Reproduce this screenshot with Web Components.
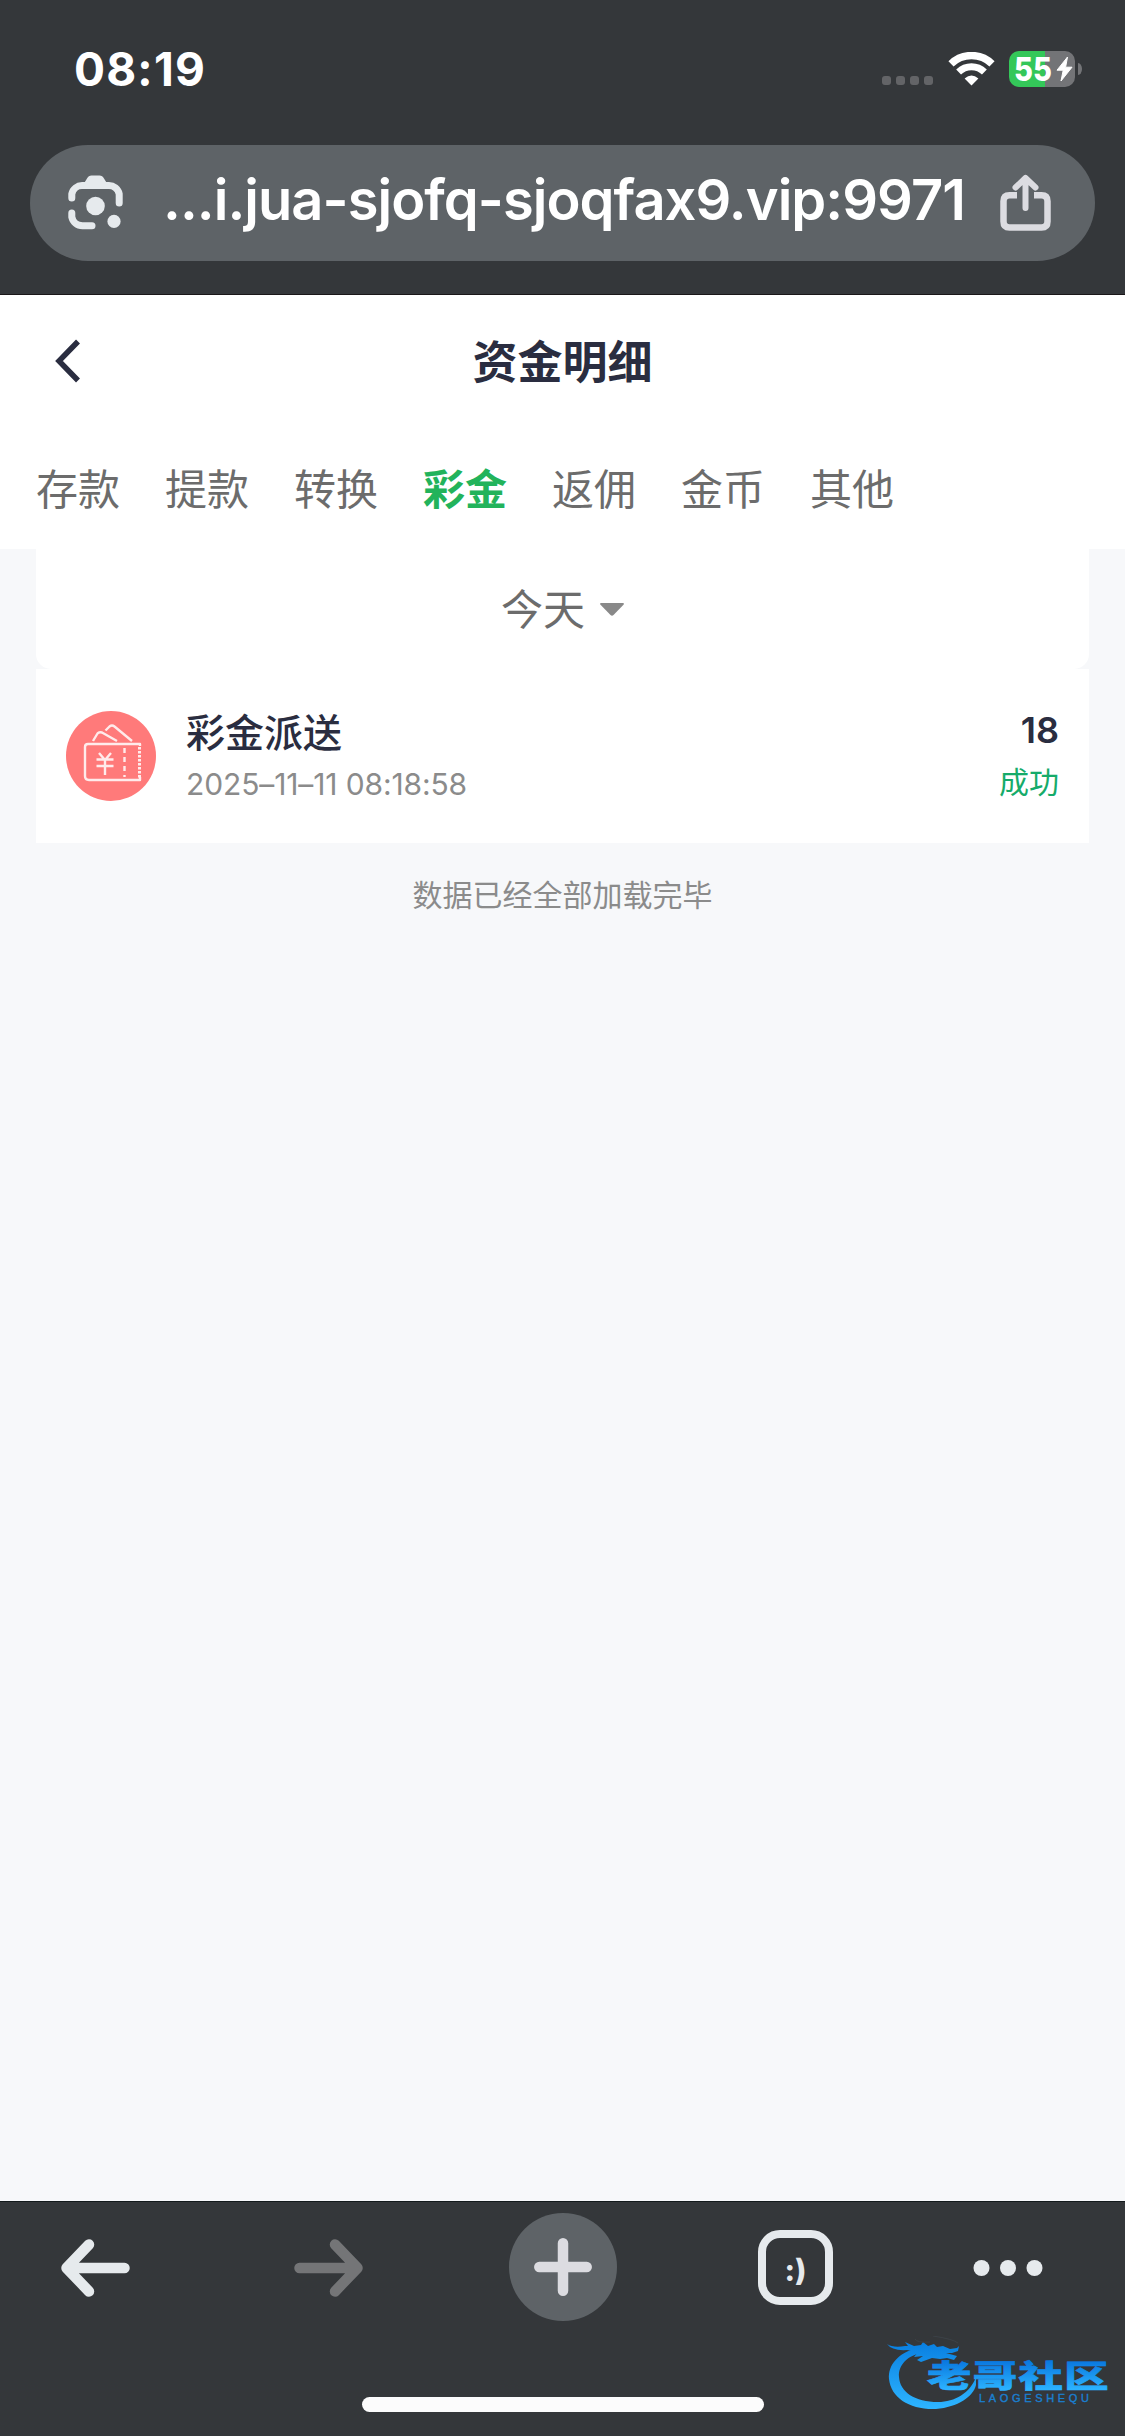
<!DOCTYPE html>
<html lang="zh-CN">
<head>
<meta charset="utf-8">
<title>资金明细</title>
<style>
  body {
    margin: 0;
    width: 1125px;
    height: 2436px;
    overflow: hidden;
    background: #f7f8fa;
    font-family: Inter, "Noto Sans CJK SC", sans-serif;
  }
</style>
</head>
<body>
<phone-screen>
  <status-bar slot="top" time="08:19" battery="55"></status-bar>
  <url-bar slot="top">...i.jua-sjofq-sjoqfax9.vip:9971</url-bar>
  <page-header>资金明细</page-header>
  <tab-list>
    <tab-item>存款</tab-item>
    <tab-item>提款</tab-item>
    <tab-item>转换</tab-item>
    <tab-item active>彩金</tab-item>
    <tab-item>返佣</tab-item>
    <tab-item>金币</tab-item>
    <tab-item>其他</tab-item>
  </tab-list>
  <date-filter>今天</date-filter>
  <record-item amount="18" status="成功">
    彩金派送
    <span slot="time">2025–11–11 08:18:58</span>
  </record-item>
  <list-end>数据已经全部加载完毕</list-end>
  <browser-toolbar slot="bottom"></browser-toolbar>
  <site-watermark slot="bottom"></site-watermark>
</phone-screen>

<script>
class PhoneScreen extends HTMLElement {
  constructor() {
    super();
    this.attachShadow({ mode: "open" });
    this.shadowRoot.innerHTML = `
      <style>
        :host {
          display: flex;
          flex-direction: column;
          position: relative;
          width: 1125px;
          height: 2436px;
          overflow: hidden;
        }
        header {
          height: 294px;
          background: #34373a;
          border-bottom: 1px solid #1a1719;
        }
        main { flex: 1; }
      </style>
      <header><slot name="top"></slot></header>
      <main><slot></slot></main>
      <slot name="bottom"></slot>
    `;
  }
}

class StatusBar extends HTMLElement {
  constructor() {
    super();
    this.attachShadow({ mode: "open" });
  }

  connectedCallback() {
    this.shadowRoot.innerHTML = `
      <style>
        :host {
          display: flex;
          align-items: center;
          justify-content: space-between;
          box-sizing: border-box;
          height: 138px;
          padding: 0 43px 0 74px;
          color: #fff;
        }
        .time {
          font-size: 46px;
          font-weight: 750;
          line-height: 60px;
          letter-spacing: 1.2px;
        }
        .right { display: flex; align-items: center; }
        .dots { display: flex; gap: 5px; margin: 23px 15px 0 0; }
        .dots i {
          width: 9px;
          height: 9px;
          border-radius: 3px;
          background: #636467;
        }
        .wifi { margin-right: 14px; }
        .battery {
          display: flex;
          align-items: center;
          justify-content: space-between;
          box-sizing: border-box;
          width: 66px;
          height: 36px;
          padding: 0 2px 0 5px;
          border-radius: 10px;
          background: linear-gradient(90deg, #34c759 36px, #737477 36px);
          font-size: 33px;
          font-weight: 800;
          line-height: 36px;
        }
        .battery span {
          width: 40px;
          transform: scaleX(0.88);
          transform-origin: left;
        }
        .tip {
          width: 4px;
          height: 12px;
          margin-left: 3px;
          border-radius: 0 4px 4px 0 / 0 6px 6px 0;
          background: #737477;
        }
        svg { display: block; flex: none; }
      </style>
      <div class="time">${this.getAttribute("time")}</div>
      <div class="right">
        <div class="dots"><i></i><i></i><i></i><i></i></div>
        <svg class="wifi" width="47" height="34" viewBox="0 0 47 34" fill="none" stroke="#fff">
          <path d="M3 11.8A29.5 29.5 0 0 1 44 11.8" stroke-width="7.4"/>
          <path d="M10.6 20A18.6 18.6 0 0 1 36.4 20" stroke-width="7"/>
          <path d="M23.5 33.6L16.6 26.6Q23.5 20.2 30.4 26.6Z" fill="#fff" stroke="none"/>
        </svg>
        <div class="battery">
          <span>${this.getAttribute("battery")}</span>
          <svg width="17" height="26" viewBox="0 0 17 26">
            <path d="M11.5 1L1 14.2h6.2L5 25 16 11.2H9.6z" fill="#fff" stroke="#fff" stroke-linejoin="round"/>
          </svg>
        </div>
        <div class="tip"></div>
      </div>
    `;
  }
}

class UrlBar extends HTMLElement {
  constructor() {
    super();
    this.attachShadow({ mode: "open" });
    this.shadowRoot.innerHTML = `
      <style>
        :host {
          display: flex;
          align-items: center;
          box-sizing: border-box;
          height: 116px;
          margin: 7px 30px 0;
          padding: 0 43px 0 37px;
          border-radius: 58px;
          background: #5e6367;
        }
        .url {
          flex: 1;
          padding-left: 38px;
          font-size: 56px;
          font-weight: 600;
          line-height: 68px;
          letter-spacing: -0.95px;
          margin-top: -6px;
          white-space: nowrap;
          color: #fff;
        }
        svg { display: block; flex: none; }
      </style>
      <svg width="58" height="58" viewBox="0 0 58 58" fill="none" stroke="#e6eaed" stroke-width="7" stroke-linecap="round">
        <path d="M4.8 24V20A10.5 10.5 0 0 1 15.3 11.6H41.5A10.5 10.5 0 0 1 52.2 20V29"/>
        <path d="M4.8 39V43A11 11 0 0 0 15.5 51.8H25"/>
        <path d="M16 11L20 4.5Q21.5 1.5 24.5 1.5H32.5Q35.5 1.5 37 4.5L41 11Z" fill="#e6eaed" stroke="none"/>
        <circle cx="28.5" cy="32" r="9.3" fill="#e6eaed" stroke="none"/>
        <circle cx="47" cy="47.4" r="6.6" fill="#e6eaed" stroke="none"/>
      </svg>
      <div class="url"><slot></slot></div>
      <svg width="53" height="58" viewBox="0 0 53 58" fill="none" stroke="#dcdce1" stroke-width="6.5" stroke-linecap="round" stroke-linejoin="round">
        <path d="M18 21.3H10.5Q4.5 21.3 4.5 27.3V47.5Q4.5 53.5 10.5 53.5H42.5Q48.5 53.5 48.5 47.5V27.3Q48.5 21.3 42.5 21.3H35" stroke-linecap="butt"/>
        <path d="M26.5 34V5M16.5 13.5L26.5 4L36.5 13.5" stroke-width="6"/>
      </svg>
    `;
  }
}

class PageHeader extends HTMLElement {
  constructor() {
    super();
    this.attachShadow({ mode: "open" });
    this.shadowRoot.innerHTML = `
      <style>
        :host {
          display: grid;
          grid-template-columns: 150px 1fr 150px;
          align-items: center;
          height: 132px;
          background: #fff;
          color: #2a2d40;
        }
        h1 {
          margin: 0;
          padding-top: 3px;
          text-align: center;
          font-size: 45px;
          font-weight: 700;
          line-height: 60px;
        }
        svg { display: block; margin-left: 54px; }
      </style>
      <svg width="28" height="44" viewBox="0 0 28 44" fill="none" stroke="#2a2d40" stroke-width="5.5">
        <path d="M24 2.5L5 22L24 41.5"/>
      </svg>
      <h1><slot></slot></h1>
    `;
  }
}

class TabList extends HTMLElement {
  constructor() {
    super();
    this.attachShadow({ mode: "open" });
    this.shadowRoot.innerHTML = `
      <style>
        :host {
          display: flex;
          align-items: center;
          gap: 45px;
          box-sizing: border-box;
          height: 122px;
          padding: 4px 0 0 36px;
          background: #fff;
        }
      </style>
      <slot></slot>
    `;
  }
}

class TabItem extends HTMLElement {
  constructor() {
    super();
    this.attachShadow({ mode: "open" });
    this.shadowRoot.innerHTML = `
      <style>
        :host {
          display: block;
          font-size: 42px;
          line-height: 60px;
          color: #6c6c6c;
        }
        :host([active]) {
          font-weight: 700;
          color: #22b35b;
        }
      </style>
      <slot></slot>
    `;
  }
}

class DateFilter extends HTMLElement {
  constructor() {
    super();
    this.attachShadow({ mode: "open" });
    this.shadowRoot.innerHTML = `
      <style>
        :host {
          display: flex;
          align-items: center;
          justify-content: center;
          gap: 15px;
          height: 120px;
          margin: 0 36px;
          border-radius: 0 0 15px 15px;
          background: #fff;
          font-size: 42px;
          line-height: 60px;
          color: #6c6c6c;
        }
        span { padding-top: 1px; }
        svg { display: block; }
      </style>
      <span><slot></slot></span>
      <svg width="24" height="13" viewBox="0 0 24 13">
        <path d="M1 0H23Q24.5 .5 23.5 1.7L13.5 12Q12 13.5 10.5 12L.5 1.7Q-.5 .5 1 0Z" fill="#898989"/>
      </svg>
    `;
  }
}

class RecordItem extends HTMLElement {
  constructor() {
    super();
    this.attachShadow({ mode: "open" });
  }

  connectedCallback() {
    this.shadowRoot.innerHTML = `
      <style>
        :host {
          display: flex;
          align-items: center;
          gap: 30px;
          height: 174px;
          margin: 0 36px;
          padding: 0 30px;
          background: #fff;
          color: #2a2d40;
        }
        svg { display: block; flex: none; }
        .info { flex: 1; padding-top: 4px; }
        .name {
          font-size: 39px;
          font-weight: 500;
          line-height: 52px;
        }
        .time {
          font-size: 30px;
          line-height: 50px;
          letter-spacing: -0.12px;
          color: #8b8b8b;
        }
        .result { padding-top: 4px; text-align: right; }
        .amount {
          font-size: 36px;
          font-weight: 600;
          line-height: 49px;
        }
        .status {
          font-size: 30px;
          line-height: 55px;
          color: #15ab6a;
        }
      </style>
      <svg width="90" height="90" viewBox="0 0 90 90" fill="none" stroke="#fff" stroke-width="2.4" stroke-linejoin="round">
        <circle cx="45" cy="45" r="45" fill="#ff7a7a" stroke="none"/>
        <g opacity="0.85">
          <path d="M74 35V33H22Q19 33 19 36V65Q19 69 23 69H74V66"/>
          <path d="M73.5 36V67" stroke-width="3" stroke-dasharray="2.5 1.5"/>
          <path d="M58.5 37V66" stroke-dasharray="5 4"/>
          <path d="M27 30L31.5 22.5Q33 20.5 36 21.5L51 30M39.5 19.5L43.5 15.5Q46 13.5 48.5 15.5L66 30"/>
          <path d="M33 42L39 49L45 42M39 49V64M30.5 48.5H47.5M30.5 55H47.5"/>
        </g>
      </svg>
      <div class="info">
        <div class="name"><slot></slot></div>
        <div class="time"><slot name="time"></slot></div>
      </div>
      <div class="result">
        <div class="amount">${this.getAttribute("amount")}</div>
        <div class="status">${this.getAttribute("status")}</div>
      </div>
    `;
  }
}

class ListEnd extends HTMLElement {
  constructor() {
    super();
    this.attachShadow({ mode: "open" });
    this.shadowRoot.innerHTML = `
      <style>
        :host {
          display: block;
          text-align: center;
          font-size: 30px;
          line-height: 105px;
          color: #8b8b8b;
        }
      </style>
      <slot></slot>
    `;
  }
}

class BrowserToolbar extends HTMLElement {
  constructor() {
    super();
    this.attachShadow({ mode: "open" });
    this.shadowRoot.innerHTML = `
      <style>
        :host {
          display: flex;
          flex-direction: column;
          justify-content: space-between;
          align-items: center;
          box-sizing: border-box;
          height: 235px;
          padding: 11px 0 24px;
          border-top: 1px solid #141a1c;
          background: #34373a;
        }
        nav {
          display: grid;
          grid-template-columns: 232px 217px 249px 215px 1fr;
          align-items: center;
          box-sizing: border-box;
          width: 100%;
          height: 108px;
          padding-left: 60px;
        }
        svg { display: block; }
        .plus {
          display: grid;
          place-items: center;
          width: 108px;
          height: 108px;
          border-radius: 50%;
          background: #5e6367;
        }
        .tabs {
          display: grid;
          place-items: center;
          box-sizing: border-box;
          width: 75px;
          height: 75px;
          border: 8px solid #e6eaed;
          border-radius: 22px;
          color: #e6eaed;
          font-size: 30px;
          font-weight: 800;
          line-height: 34px;
        }
        .tabs span { padding-top: 5px; }
        .home {
          width: 402px;
          height: 15px;
          border-radius: 8px;
          background: #fcfcfc;
        }
      </style>
      <nav>
        <svg width="72" height="60" viewBox="0 0 72 60" fill="none" stroke="#e6eaed" stroke-width="10.5" stroke-linecap="round" stroke-linejoin="round">
          <path d="M64.5 31H7M29 7.5L6.5 31L29 54.5"/>
        </svg>
        <svg width="72" height="60" viewBox="0 0 72 60" fill="none" stroke="#747577" stroke-width="10.5" stroke-linecap="round" stroke-linejoin="round">
          <path d="M7.5 31H65M43 7.5L65.5 31L43 54.5"/>
        </svg>
        <div class="plus">
          <svg width="58" height="58" viewBox="0 0 58 58" fill="none" stroke="#dcdce1" stroke-width="10.5" stroke-linecap="round">
            <path d="M29 5.3V52.7M5.3 29H52.7"/>
          </svg>
        </div>
        <div class="tabs"><span>:)</span></div>
        <svg width="70" height="18" viewBox="0 0 70 18" fill="#e6eaed">
          <circle cx="8.5" cy="10" r="8"/>
          <circle cx="35" cy="10" r="8"/>
          <circle cx="61.5" cy="10" r="8"/>
        </svg>
      </nav>
      <div class="home"></div>
    `;
  }
}

// floats above the toolbar in the bottom right corner
class SiteWatermark extends HTMLElement {
  constructor() {
    super();
    this.attachShadow({ mode: "open" });
    this.shadowRoot.innerHTML = `
      <style>
        :host {
          position: absolute;
          right: 10px;
          bottom: 20px;
        }
        svg { display: block; }
        text { font-family: "Noto Sans CJK SC", sans-serif; font-weight: 900; }
        .latin { font-family: "Liberation Sans", sans-serif; font-weight: 400; }
      </style>
      <svg width="230" height="80" viewBox="0 0 230 80">
        <defs>
          <linearGradient id="ring" gradientUnits="userSpaceOnUse" x1="0" y1="5" x2="0" y2="72">
            <stop offset="0" stop-color="#087ee0"/>
            <stop offset="1" stop-color="#2db4ff"/>
          </linearGradient>
          <linearGradient id="word" x1="0" y1="0.15" x2="0" y2="0.85">
            <stop offset="0" stop-color="#0672dc"/>
            <stop offset="1" stop-color="#2bb2ff"/>
          </linearGradient>
        </defs>
        <path d="M32 12C13 17 3 29 4 43C6 62 25 74 51 73C73 71 88 61 91 49L91 41C85 57 70 66 53 66C30 66 15 56 14 41C13 29 23 19 37 17Z" fill="url(#ring)"/>
        <path d="M2 8Q8 12 20 10L23 10L20 6L29 10L36 9L38 6L43 10L49 8L52 11L58 10L65 13L72 12L74 10L73 15L67 17L61 17L72 20L69 24L62 22L55 23L47 22L36 26L32 24L38 20L29 21L33 16L22 14Q7 15 2 8Z" fill="url(#ring)"/>
        <path d="M30 3Q32 7 45 6M48 0Q68 3 73 7" fill="none" stroke="#3c4247"/>
        <text transform="translate(42 51) scale(1.43 1)" font-size="31" textLength="127" fill="url(#word)" stroke="url(#word)" stroke-width="0.6">老哥社区</text>
        <text class="latin" x="94" y="66" font-size="11" textLength="110" fill="#1a7fd0" stroke="#1a7fd0" stroke-width="0.4">LAOGESHEQU</text>
      </svg>
    `;
  }
}

customElements.define("phone-screen", PhoneScreen);
customElements.define("status-bar", StatusBar);
customElements.define("url-bar", UrlBar);
customElements.define("page-header", PageHeader);
customElements.define("tab-list", TabList);
customElements.define("tab-item", TabItem);
customElements.define("date-filter", DateFilter);
customElements.define("record-item", RecordItem);
customElements.define("list-end", ListEnd);
customElements.define("browser-toolbar", BrowserToolbar);
customElements.define("site-watermark", SiteWatermark);
</script>
</body>
</html>
